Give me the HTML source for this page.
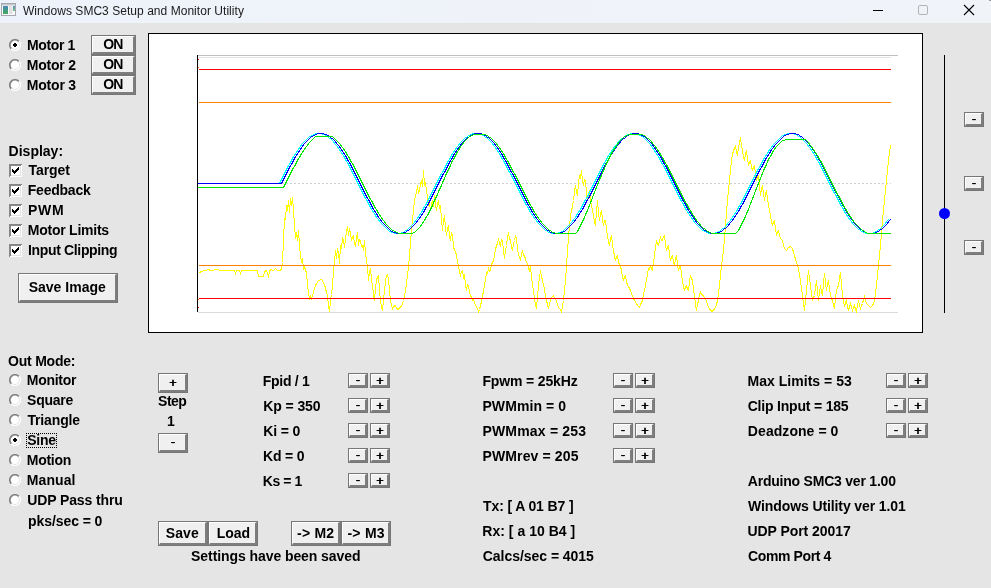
<!DOCTYPE html>
<html>
<head>
<meta charset="utf-8">
<title>Windows SMC3 Setup and Monitor Utility</title>
<style>
html,body{margin:0;padding:0;}
body{will-change:transform;width:991px;height:588px;overflow:hidden;background:#e5e5e5;position:relative;font-family:"Liberation Sans",sans-serif;color:#000;}
#titlebar{position:absolute;left:0;top:0;width:991px;height:23px;background:linear-gradient(90deg,#eef2fa,#f0f3f8);}
#corner{position:absolute;left:989px;top:0;width:2px;height:1px;background:#9a9a9a;}
#title{position:absolute;left:23px;top:0;height:22px;line-height:22px;font-size:12px;color:#1a1a1a;white-space:nowrap;letter-spacing:0.04px;}
.t{position:absolute;font-weight:bold;font-size:14px;line-height:16px;height:16px;white-space:nowrap;}
.btn{position:absolute;box-sizing:border-box;border:1px solid #767676;background:#f0f0f0;}
.btn::before{content:"";position:absolute;left:0;top:0;right:0;bottom:0;border-style:solid;border-width:1px 2px 2px 1px;border-color:#fff #7e7e7e #7e7e7e #fff;}
.sb{position:absolute;box-sizing:border-box;width:20px;height:15px;border:1px solid #767676;background:#f0f0f0;}
.sb::before{content:"";position:absolute;left:0;top:0;right:0;bottom:0;border-style:solid;border-width:1px 2px 2px 1px;border-color:#fff #7e7e7e #7e7e7e #fff;}
.g{position:absolute;font-weight:normal;font-size:12px;line-height:16px;height:16px;white-space:nowrap;text-shadow:1px 0 0 #000;}
.chk{position:absolute;width:13px;height:13px;}
.radio{position:absolute;width:12px;height:12px;}
#plot{position:absolute;left:148px;top:33px;width:775px;height:300px;box-sizing:border-box;border:1px solid #000;background:#fff;}
#focus{position:absolute;left:26px;top:433px;width:31px;height:15px;box-sizing:border-box;border:1px dotted #000;}
</style>
</head>
<body>
<div id="titlebar">
<svg style="position:absolute;left:1px;top:3px" width="16" height="14" viewBox="0 0 16 14"><defs><linearGradient id="ig" x1="0" y1="0" x2="0" y2="1"><stop offset="0" stop-color="#4f86c0"/><stop offset="0.45" stop-color="#3f9a8a"/><stop offset="1" stop-color="#45a860"/></linearGradient><linearGradient id="ih" x1="0" y1="0" x2="0" y2="1"><stop offset="0" stop-color="#5a90c8"/><stop offset="1" stop-color="#7ac080"/></linearGradient></defs><rect x="0.5" y="0.5" width="14" height="12" fill="#fafafa" stroke="#a4a8ae"/><rect x="1" y="1" width="13" height="1.5" fill="#c4c8cc"/><rect x="2" y="3" width="5" height="8" fill="url(#ig)"/><rect x="8" y="3" width="3.5" height="8" fill="#e0e0e0"/><rect x="12" y="3" width="2" height="5" fill="url(#ih)"/></svg>
<div id="title">Windows SMC3 Setup and Monitor Utility</div>
<svg style="position:absolute;left:860px;top:0" width="131" height="23" viewBox="0 0 131 23"><path d="M13 10.5H23" stroke="#000" stroke-width="1" fill="none"/><rect x="58.5" y="5.5" width="9" height="9" rx="1.5" fill="none" stroke="#b4b4b4"/><path d="M104 5L114 15M114 5L104 15" stroke="#000" stroke-width="1.1" fill="none"/></svg>
</div>
<div id="corner"></div>
<div id="plot"></div>

<!--GRAPH-->
<svg id="g" style="position:absolute;left:0;top:0" width="991" height="340" viewBox="0 0 991 340">
<g shape-rendering="crispEdges" fill="none">
<path d="M197 55.5H898" stroke="#c0c0c0"/>
<path d="M198 57.5H891" stroke="#e4e4e4"/>
<path d="M198 312.5H898" stroke="#dcdcdc"/>
<path d="M198 183.5H891" stroke="#cecece" stroke-dasharray="2 2"/>
</g>
<polyline points="199.5,273.5 200.5,271.5 205.5,270.5 208.5,269.5 210.5,270.5 218.5,269.5 219.5,270.5 234.5,270.5 235.5,273.5 236.5,270.5 239.5,270.5 240.5,273.5 241.5,270.5 257.5,270.5 258.5,276.5 263.5,276.5 264.5,271.5 266.5,270.5 267.5,273.5 268.5,276.5 269.5,271.5 270.5,269.5 273.5,270.5 275.5,268.5 277.5,270.5 280.5,270.5 281.5,268.5 282.5,262.5 283.5,240.5 284.5,218.5 285.5,219.5 286.5,205.5 287.5,210.5 288.5,200.5 289.5,212.5 290.5,198.5 291.5,205.5 292.5,197.5 293.5,210.5 294.5,225.5 295.5,238.5 296.5,232.5 297.5,240.5 298.5,230.5 299.5,245.5 300.5,255.5 301.5,262.5 302.5,258.5 303.5,268.5 304.5,266.5 305.5,270.5 306.5,272.5 307.5,285.5 308.5,292.5 309.5,299.5 310.5,296.5 311.5,298.5 312.5,295.5 314.5,288.5 315.5,285.5 318.5,280.5 321.5,279.5 324.5,284.5 326.5,292.5 327.5,295.5 328.5,305.5 329.5,311.5 330.5,300.5 331.5,294.5 332.5,285.5 333.5,270.5 334.5,262.5 335.5,250.5 336.5,258.5 337.5,248.5 338.5,252.5 339.5,263.5 340.5,245.5 341.5,248.5 342.5,237.5 343.5,240.5 344.5,247.5 345.5,238.5 346.5,232.5 347.5,226.5 348.5,235.5 349.5,228.5 350.5,233.5 351.5,240.5 352.5,236.5 353.5,235.5 354.5,243.5 355.5,245.5 356.5,238.5 357.5,232.5 358.5,245.5 359.5,239.5 360.5,240.5 361.5,246.5 362.5,245.5 363.5,250.5 364.5,240.5 365.5,252.5 366.5,260.5 367.5,266.5 368.5,280.5 369.5,272.5 370.5,268.5 371.5,279.5 372.5,285.5 373.5,294.5 374.5,300.5 375.5,288.5 376.5,280.5 377.5,276.5 378.5,275.5 379.5,290.5 380.5,300.5 381.5,306.5 382.5,310.5 383.5,300.5 384.5,290.5 385.5,281.5 386.5,275.5 387.5,274.5 388.5,278.5 389.5,290.5 390.5,300.5 391.5,305.5 392.5,308.5 393.5,306.5 395.5,305.5 396.5,308.5 398.5,309.5 399.5,307.5 401.5,306.5 402.5,303.5 403.5,300.5 404.5,296.5 405.5,290.5 406.5,283.5 407.5,275.5 408.5,266.5 409.5,255.5 410.5,242.5 411.5,230.5 412.5,220.5 413.5,210.5 414.5,200.5 415.5,195.5 416.5,192.5 417.5,185.5 418.5,193.5 419.5,190.5 420.5,183.5 421.5,180.5 422.5,186.5 423.5,170.5 424.5,185.5 425.5,182.5 426.5,190.5 427.5,196.5 428.5,205.5 429.5,202.5 430.5,210.5 431.5,204.5 432.5,200.5 433.5,206.5 434.5,195.5 435.5,204.5 436.5,210.5 437.5,203.5 438.5,200.5 439.5,208.5 440.5,205.5 441.5,219.5 442.5,230.5 443.5,220.5 444.5,215.5 445.5,228.5 446.5,235.5 447.5,228.5 448.5,225.5 449.5,236.5 450.5,240.5 451.5,232.5 452.5,235.5 453.5,246.5 454.5,250.5 455.5,251.5 456.5,255.5 457.5,262.5 458.5,265.5 459.5,272.5 460.5,275.5 461.5,271.5 462.5,270.5 463.5,277.5 464.5,275.5 465.5,284.5 466.5,290.5 467.5,284.5 468.5,285.5 469.5,292.5 470.5,295.5 471.5,297.5 472.5,300.5 473.5,299.5 475.5,305.5 476.5,306.5 478.5,311.5 479.5,309.5 480.5,305.5 481.5,301.5 482.5,295.5 483.5,291.5 484.5,285.5 485.5,279.5 486.5,272.5 487.5,273.5 488.5,268.5 489.5,271.5 490.5,270.5 491.5,264.5 492.5,262.5 493.5,260.5 494.5,255.5 495.5,249.5 496.5,245.5 497.5,243.5 498.5,238.5 499.5,243.5 500.5,245.5 501.5,239.5 502.5,240.5 503.5,250.5 504.5,258.5 505.5,250.5 506.5,245.5 507.5,237.5 508.5,232.5 509.5,238.5 510.5,240.5 511.5,247.5 512.5,250.5 513.5,243.5 514.5,240.5 515.5,236.5 516.5,238.5 517.5,248.5 518.5,255.5 519.5,256.5 520.5,260.5 521.5,254.5 522.5,250.5 523.5,255.5 524.5,255.5 525.5,259.5 526.5,262.5 527.5,263.5 528.5,268.5 529.5,270.5 530.5,266.5 531.5,276.5 532.5,284.5 533.5,290.5 534.5,298.5 535.5,304.5 536.5,308.5 537.5,296.5 538.5,285.5 539.5,277.5 540.5,270.5 541.5,276.5 542.5,280.5 543.5,284.5 545.5,295.5 546.5,300.5 548.5,308.5 549.5,303.5 550.5,300.5 551.5,297.5 553.5,295.5 554.5,298.5 556.5,300.5 557.5,305.5 559.5,308.5 560.5,309.5 561.5,311.5 562.5,306.5 563.5,300.5 564.5,290.5 565.5,280.5 566.5,265.5 567.5,250.5 568.5,237.5 569.5,225.5 570.5,216.5 571.5,210.5 572.5,206.5 573.5,200.5 574.5,191.5 575.5,185.5 576.5,192.5 577.5,195.5 578.5,183.5 579.5,175.5 580.5,178.5 581.5,170.5 582.5,180.5 583.5,185.5 584.5,179.5 585.5,180.5 586.5,192.5 587.5,200.5 588.5,193.5 589.5,190.5 590.5,199.5 591.5,205.5 592.5,209.5 593.5,215.5 594.5,221.5 595.5,225.5 596.5,211.5 597.5,200.5 598.5,212.5 599.5,220.5 600.5,213.5 601.5,210.5 602.5,219.5 603.5,225.5 604.5,220.5 605.5,220.5 606.5,229.5 607.5,235.5 608.5,241.5 609.5,245.5 610.5,238.5 611.5,235.5 612.5,244.5 613.5,250.5 614.5,256.5 615.5,260.5 616.5,256.5 617.5,255.5 618.5,261.5 619.5,265.5 620.5,266.5 621.5,270.5 622.5,276.5 623.5,280.5 624.5,276.5 625.5,275.5 626.5,281.5 627.5,285.5 628.5,286.5 630.5,290.5 631.5,293.5 633.5,298.5 634.5,300.5 636.5,303.5 637.5,305.5 639.5,307.5 640.5,304.5 642.5,300.5 643.5,294.5 645.5,285.5 646.5,279.5 648.5,268.5 649.5,269.5 650.5,265.5 651.5,269.5 652.5,270.5 653.5,262.5 654.5,255.5 655.5,247.5 656.5,240.5 657.5,244.5 658.5,245.5 659.5,240.5 660.5,237.5 661.5,240.5 662.5,240.5 663.5,236.5 664.5,235.5 665.5,244.5 666.5,250.5 667.5,246.5 668.5,245.5 669.5,254.5 670.5,260.5 671.5,256.5 672.5,255.5 673.5,261.5 674.5,265.5 675.5,259.5 676.5,255.5 677.5,264.5 678.5,270.5 679.5,266.5 680.5,265.5 681.5,274.5 682.5,280.5 683.5,286.5 684.5,290.5 685.5,286.5 686.5,285.5 687.5,289.5 688.5,290.5 689.5,281.5 690.5,275.5 691.5,278.5 692.5,280.5 693.5,289.5 694.5,295.5 695.5,304.5 696.5,310.5 697.5,304.5 698.5,300.5 699.5,294.5 700.5,292.5 701.5,294.5 703.5,295.5 704.5,298.5 706.5,300.5 707.5,305.5 709.5,308.5 710.5,310.5 712.5,311.5 713.5,309.5 715.5,308.5 716.5,304.5 717.5,300.5 718.5,293.5 719.5,285.5 720.5,275.5 721.5,265.5 722.5,258.5 723.5,250.5 724.5,238.5 725.5,225.5 726.5,212.5 727.5,200.5 728.5,190.5 729.5,180.5 730.5,170.5 731.5,160.5 732.5,154.5 733.5,150.5 734.5,148.5 735.5,145.5 736.5,151.5 737.5,155.5 738.5,147.5 739.5,142.5 740.5,137.5 741.5,145.5 742.5,150.5 743.5,156.5 744.5,160.5 745.5,154.5 746.5,150.5 747.5,158.5 748.5,165.5 749.5,161.5 750.5,160.5 751.5,166.5 752.5,170.5 753.5,166.5 754.5,165.5 755.5,174.5 756.5,180.5 757.5,176.5 758.5,175.5 759.5,186.5 760.5,195.5 761.5,189.5 762.5,185.5 763.5,193.5 764.5,200.5 765.5,194.5 766.5,190.5 767.5,198.5 768.5,205.5 769.5,210.5 770.5,215.5 771.5,221.5 772.5,225.5 773.5,221.5 774.5,220.5 775.5,228.5 776.5,235.5 777.5,231.5 778.5,230.5 779.5,235.5 780.5,238.5 781.5,239.5 782.5,240.5 783.5,245.5 784.5,248.5 785.5,249.5 786.5,250.5 788.5,247.5 790.5,246.5 792.5,248.5 793.5,252.5 794.5,255.5 795.5,259.5 796.5,262.5 797.5,265.5 798.5,268.5 799.5,274.5 800.5,280.5 801.5,288.5 802.5,295.5 803.5,303.5 804.5,310.5 805.5,299.5 806.5,290.5 807.5,279.5 808.5,270.5 809.5,278.5 810.5,285.5 811.5,293.5 812.5,300.5 813.5,297.5 814.5,295.5 815.5,287.5 816.5,280.5 817.5,291.5 818.5,300.5 819.5,292.5 820.5,285.5 821.5,291.5 822.5,295.5 823.5,283.5 824.5,273.5 825.5,282.5 826.5,290.5 827.5,284.5 828.5,280.5 829.5,288.5 830.5,295.5 831.5,298.5 832.5,300.5 833.5,305.5 834.5,308.5 835.5,298.5 836.5,290.5 837.5,287.5 838.5,285.5 839.5,278.5 840.5,272.5 841.5,284.5 842.5,295.5 843.5,301.5 844.5,306.5 845.5,302.5 846.5,300.5 847.5,306.5 848.5,310.5 849.5,306.5 850.5,303.5 851.5,307.5 852.5,310.5 853.5,307.5 854.5,305.5 855.5,309.5 856.5,311.5 857.5,305.5 858.5,300.5 859.5,305.5 860.5,308.5 861.5,305.5 862.5,303.5 863.5,299.5 864.5,296.5 865.5,300.5 866.5,303.5 868.5,305.5 870.5,307.5 872.5,305.5 873.5,303.5 874.5,300.5 875.5,293.5 876.5,285.5 877.5,275.5 878.5,265.5 879.5,255.5 880.5,245.5 881.5,232.5 882.5,220.5 883.5,210.5 884.5,200.5 885.5,190.5 886.5,180.5 887.5,170.5 888.5,160.5 889.5,152.5 890.5,145.5" fill="none" stroke="#ffff00" stroke-width="1" shape-rendering="crispEdges"/>
<g shape-rendering="crispEdges" fill="none">
<path d="M199 69.5H891M199 298.5H891" stroke="#ff0000" stroke-width="1"/>
<path d="M199 102.5H891M199 265.5H891" stroke="#ff8000" stroke-width="1"/>
</g>
<polyline points="279.5,183.5 280.5,181.5 281.5,179.5 282.5,177.5 283.5,175.5 284.5,173.5 285.5,171.5 286.5,169.5 287.5,167.5 288.5,165.5 289.5,164.5 290.5,162.5 291.5,160.5 292.5,158.5 293.5,156.5 294.5,155.5 295.5,153.5 296.5,152.5 297.5,150.5 298.5,149.5 299.5,147.5 300.5,146.5 301.5,144.5 302.5,143.5 303.5,142.5 304.5,141.5 305.5,140.5 306.5,139.5 307.5,138.5 308.5,137.5 309.5,136.5 310.5,136.5 311.5,135.5 312.5,135.5 313.5,134.5 314.5,134.5 315.5,133.5 316.5,133.5 317.5,133.5 318.5,133.5 319.5,133.5 320.5,133.5 321.5,133.5 322.5,134.5 323.5,134.5 324.5,134.5 325.5,135.5 326.5,135.5 327.5,136.5 328.5,137.5 329.5,138.5 330.5,138.5 331.5,139.5 332.5,140.5 333.5,141.5 334.5,143.5 335.5,144.5 336.5,145.5 337.5,146.5 338.5,148.5 339.5,149.5 340.5,151.5 341.5,152.5 342.5,154.5 343.5,155.5 344.5,157.5 345.5,159.5 346.5,161.5 347.5,162.5 348.5,164.5 349.5,166.5 350.5,168.5 351.5,170.5 352.5,172.5 353.5,174.5 354.5,176.5 355.5,178.5 356.5,180.5 357.5,182.5 358.5,184.5 359.5,186.5 360.5,188.5 361.5,190.5 362.5,192.5 363.5,194.5 364.5,196.5 365.5,198.5 366.5,199.5 367.5,201.5 368.5,203.5 369.5,205.5 370.5,207.5 371.5,209.5 372.5,210.5 373.5,212.5 374.5,213.5 375.5,215.5 376.5,217.5 377.5,218.5 378.5,219.5 379.5,221.5 380.5,222.5 381.5,223.5 382.5,224.5 383.5,225.5 384.5,226.5 385.5,227.5 386.5,228.5 387.5,229.5 388.5,230.5 389.5,231.5 390.5,231.5 391.5,232.5 392.5,232.5 393.5,232.5 394.5,233.5 395.5,233.5 396.5,233.5 397.5,233.5 398.5,233.5 399.5,233.5 400.5,233.5 401.5,232.5 402.5,232.5 403.5,232.5 404.5,231.5 405.5,230.5 406.5,230.5 407.5,229.5 408.5,228.5 409.5,227.5 410.5,226.5 411.5,225.5 412.5,224.5 413.5,223.5 414.5,222.5 415.5,220.5 416.5,219.5 417.5,218.5 418.5,216.5 419.5,215.5 420.5,213.5 421.5,212.5 422.5,210.5 423.5,208.5 424.5,206.5 425.5,205.5 426.5,203.5 427.5,201.5 428.5,199.5 429.5,197.5 430.5,195.5 431.5,193.5 432.5,191.5 433.5,189.5 434.5,187.5 435.5,185.5 436.5,183.5 437.5,181.5 438.5,179.5 439.5,177.5 440.5,175.5 441.5,173.5 442.5,172.5 443.5,170.5 444.5,168.5 445.5,166.5 446.5,164.5 447.5,162.5 448.5,160.5 449.5,159.5 450.5,157.5 451.5,155.5 452.5,153.5 453.5,152.5 454.5,150.5 455.5,149.5 456.5,147.5 457.5,146.5 458.5,145.5 459.5,143.5 460.5,142.5 461.5,141.5 462.5,140.5 463.5,139.5 464.5,138.5 465.5,137.5 466.5,137.5 467.5,136.5 468.5,135.5 469.5,135.5 470.5,134.5 471.5,134.5 472.5,133.5 473.5,133.5 474.5,133.5 475.5,133.5 476.5,133.5 477.5,133.5 478.5,133.5 479.5,133.5 480.5,134.5 481.5,134.5 482.5,135.5 483.5,135.5 484.5,136.5 485.5,137.5 486.5,137.5 487.5,138.5 488.5,139.5 489.5,140.5 490.5,141.5 491.5,142.5 492.5,143.5 493.5,145.5 494.5,146.5 495.5,147.5 496.5,149.5 497.5,150.5 498.5,152.5 499.5,153.5 500.5,155.5 501.5,157.5 502.5,159.5 503.5,160.5 504.5,162.5 505.5,164.5 506.5,166.5 507.5,168.5 508.5,170.5 509.5,172.5 510.5,173.5 511.5,175.5 512.5,177.5 513.5,179.5 514.5,181.5 515.5,183.5 516.5,185.5 517.5,187.5 518.5,189.5 519.5,191.5 520.5,193.5 521.5,195.5 522.5,197.5 523.5,199.5 524.5,201.5 525.5,203.5 526.5,205.5 527.5,206.5 528.5,208.5 529.5,210.5 530.5,212.5 531.5,213.5 532.5,215.5 533.5,216.5 534.5,218.5 535.5,219.5 536.5,220.5 537.5,222.5 538.5,223.5 539.5,224.5 540.5,225.5 541.5,226.5 542.5,227.5 543.5,228.5 544.5,229.5 545.5,230.5 546.5,230.5 547.5,231.5 548.5,232.5 549.5,232.5 550.5,232.5 551.5,233.5 552.5,233.5 553.5,233.5 554.5,233.5 555.5,233.5 556.5,233.5 557.5,233.5 558.5,232.5 559.5,232.5 560.5,232.5 561.5,231.5 562.5,231.5 563.5,230.5 564.5,229.5 565.5,228.5 566.5,227.5 567.5,226.5 568.5,225.5 569.5,224.5 570.5,223.5 571.5,222.5 572.5,221.5 573.5,219.5 574.5,218.5 575.5,217.5 576.5,215.5 577.5,213.5 578.5,212.5 579.5,210.5 580.5,209.5 581.5,207.5 582.5,205.5 583.5,203.5 584.5,201.5 585.5,199.5 586.5,198.5 587.5,196.5 588.5,194.5 589.5,192.5 590.5,190.5 591.5,188.5 592.5,186.5 593.5,184.5 594.5,182.5 595.5,180.5 596.5,178.5 597.5,176.5 598.5,174.5 599.5,172.5 600.5,170.5 601.5,168.5 602.5,166.5 603.5,164.5 604.5,162.5 605.5,161.5 606.5,159.5 607.5,157.5 608.5,155.5 609.5,154.5 610.5,152.5 611.5,151.5 612.5,149.5 613.5,148.5 614.5,146.5 615.5,145.5 616.5,144.5 617.5,143.5 618.5,141.5 619.5,140.5 620.5,139.5 621.5,138.5 622.5,138.5 623.5,137.5 624.5,136.5 625.5,135.5 626.5,135.5 627.5,134.5 628.5,134.5 629.5,134.5 630.5,133.5 631.5,133.5 632.5,133.5 633.5,133.5 634.5,133.5 635.5,133.5 636.5,133.5 637.5,134.5 638.5,134.5 639.5,135.5 640.5,135.5 641.5,136.5 642.5,136.5 643.5,137.5 644.5,138.5 645.5,139.5 646.5,140.5 647.5,141.5 648.5,142.5 649.5,143.5 650.5,144.5 651.5,146.5 652.5,147.5 653.5,149.5 654.5,150.5 655.5,152.5 656.5,153.5 657.5,155.5 658.5,156.5 659.5,158.5 660.5,160.5 661.5,162.5 662.5,164.5 663.5,165.5 664.5,167.5 665.5,169.5 666.5,171.5 667.5,173.5 668.5,175.5 669.5,177.5 670.5,179.5 671.5,181.5 672.5,183.5 673.5,185.5 674.5,187.5 675.5,189.5 676.5,191.5 677.5,193.5 678.5,195.5 679.5,197.5 680.5,199.5 681.5,201.5 682.5,202.5 683.5,204.5 684.5,206.5 685.5,208.5 686.5,210.5 687.5,211.5 688.5,213.5 689.5,214.5 690.5,216.5 691.5,217.5 692.5,219.5 693.5,220.5 694.5,222.5 695.5,223.5 696.5,224.5 697.5,225.5 698.5,226.5 699.5,227.5 700.5,228.5 701.5,229.5 702.5,230.5 703.5,230.5 704.5,231.5 705.5,231.5 706.5,232.5 707.5,232.5 708.5,233.5 709.5,233.5 710.5,233.5 711.5,233.5 712.5,233.5 713.5,233.5 714.5,233.5 715.5,232.5 716.5,232.5 717.5,232.5 718.5,231.5 719.5,231.5 720.5,230.5 721.5,229.5 722.5,228.5 723.5,228.5 724.5,227.5 725.5,226.5 726.5,225.5 727.5,223.5 728.5,222.5 729.5,221.5 730.5,220.5 731.5,218.5 732.5,217.5 733.5,215.5 734.5,214.5 735.5,212.5 736.5,211.5 737.5,209.5 738.5,207.5 739.5,205.5 740.5,204.5 741.5,202.5 742.5,200.5 743.5,198.5 744.5,196.5 745.5,194.5 746.5,192.5 747.5,190.5 748.5,188.5 749.5,186.5 750.5,184.5 751.5,182.5 752.5,180.5 753.5,178.5 754.5,176.5 755.5,174.5 756.5,172.5 757.5,170.5 758.5,168.5 759.5,167.5 760.5,165.5 761.5,163.5 762.5,161.5 763.5,159.5 764.5,157.5 765.5,156.5 766.5,154.5 767.5,153.5 768.5,151.5 769.5,149.5 770.5,148.5 771.5,147.5 772.5,145.5 773.5,144.5 774.5,143.5 775.5,142.5 776.5,141.5 777.5,140.5 778.5,139.5 779.5,138.5 780.5,137.5 781.5,136.5 782.5,135.5 783.5,135.5 784.5,134.5 785.5,134.5 786.5,134.5 787.5,133.5 788.5,133.5 789.5,133.5 790.5,133.5 791.5,133.5 792.5,133.5 793.5,133.5 794.5,134.5 795.5,134.5 796.5,134.5 797.5,135.5 798.5,136.5 799.5,136.5 800.5,137.5 801.5,138.5 802.5,139.5 803.5,140.5 804.5,141.5 805.5,142.5 806.5,143.5 807.5,144.5 808.5,146.5 809.5,147.5 810.5,148.5 811.5,150.5 812.5,151.5 813.5,153.5 814.5,154.5 815.5,156.5 816.5,158.5 817.5,160.5 818.5,161.5 819.5,163.5 820.5,165.5 821.5,167.5 822.5,169.5 823.5,171.5 824.5,173.5 825.5,175.5 826.5,177.5 827.5,179.5 828.5,181.5 829.5,183.5 830.5,185.5 831.5,187.5 832.5,189.5 833.5,191.5 834.5,193.5 835.5,194.5 836.5,196.5 837.5,198.5 838.5,200.5 839.5,202.5 840.5,204.5 841.5,206.5 842.5,207.5 843.5,209.5 844.5,211.5 845.5,213.5 846.5,214.5 847.5,216.5 848.5,217.5 849.5,219.5 850.5,220.5 851.5,221.5 852.5,223.5 853.5,224.5 854.5,225.5 855.5,226.5 856.5,227.5 857.5,228.5 858.5,229.5 859.5,229.5 860.5,230.5 861.5,231.5 862.5,231.5 863.5,232.5 864.5,232.5 865.5,233.5 866.5,233.5 867.5,233.5 868.5,233.5 869.5,233.5 870.5,233.5 871.5,233.5 872.5,233.5 873.5,232.5 874.5,232.5 875.5,231.5 876.5,231.5 877.5,230.5 878.5,229.5 879.5,229.5 880.5,228.5 881.5,227.5 882.5,226.5 883.5,225.5 884.5,224.5 885.5,223.5 886.5,221.5 887.5,220.5 888.5,219.5" fill="none" stroke="#00ffff" stroke-width="1" shape-rendering="crispEdges"/>
<polyline points="197.5,183.5 198.5,183.5 199.5,183.5 200.5,183.5 201.5,183.5 202.5,183.5 203.5,183.5 204.5,183.5 205.5,183.5 206.5,183.5 207.5,183.5 208.5,183.5 209.5,183.5 210.5,183.5 211.5,183.5 212.5,183.5 213.5,183.5 214.5,183.5 215.5,183.5 216.5,183.5 217.5,183.5 218.5,183.5 219.5,183.5 220.5,183.5 221.5,183.5 222.5,183.5 223.5,183.5 224.5,183.5 225.5,183.5 226.5,183.5 227.5,183.5 228.5,183.5 229.5,183.5 230.5,183.5 231.5,183.5 232.5,183.5 233.5,183.5 234.5,183.5 235.5,183.5 236.5,183.5 237.5,183.5 238.5,183.5 239.5,183.5 240.5,183.5 241.5,183.5 242.5,183.5 243.5,183.5 244.5,183.5 245.5,183.5 246.5,183.5 247.5,183.5 248.5,183.5 249.5,183.5 250.5,183.5 251.5,183.5 252.5,183.5 253.5,183.5 254.5,183.5 255.5,183.5 256.5,183.5 257.5,183.5 258.5,183.5 259.5,183.5 260.5,183.5 261.5,183.5 262.5,183.5 263.5,183.5 264.5,183.5 265.5,183.5 266.5,183.5 267.5,183.5 268.5,183.5 269.5,183.5 270.5,183.5 271.5,183.5 272.5,183.5 273.5,183.5 274.5,183.5 275.5,183.5 276.5,183.5 277.5,183.5 278.5,183.5 279.5,183.5 280.5,183.5 281.5,183.5 282.5,181.5 283.5,179.5 284.5,177.5 285.5,175.5 286.5,173.5 287.5,171.5 288.5,169.5 289.5,167.5 290.5,165.5 291.5,164.5 292.5,162.5 293.5,160.5 294.5,158.5 295.5,156.5 296.5,155.5 297.5,153.5 298.5,152.5 299.5,150.5 300.5,149.5 301.5,147.5 302.5,146.5 303.5,144.5 304.5,143.5 305.5,142.5 306.5,141.5 307.5,140.5 308.5,139.5 309.5,138.5 310.5,137.5 311.5,136.5 312.5,136.5 313.5,135.5 314.5,135.5 315.5,134.5 316.5,134.5 317.5,133.5 318.5,133.5 319.5,133.5 320.5,133.5 321.5,133.5 322.5,133.5 323.5,133.5 324.5,134.5 325.5,134.5 326.5,134.5 327.5,135.5 328.5,135.5 329.5,136.5 330.5,137.5 331.5,138.5 332.5,138.5 333.5,139.5 334.5,140.5 335.5,141.5 336.5,143.5 337.5,144.5 338.5,145.5 339.5,146.5 340.5,148.5 341.5,149.5 342.5,151.5 343.5,152.5 344.5,154.5 345.5,155.5 346.5,157.5 347.5,159.5 348.5,161.5 349.5,162.5 350.5,164.5 351.5,166.5 352.5,168.5 353.5,170.5 354.5,172.5 355.5,174.5 356.5,176.5 357.5,178.5 358.5,180.5 359.5,182.5 360.5,184.5 361.5,186.5 362.5,188.5 363.5,190.5 364.5,192.5 365.5,194.5 366.5,196.5 367.5,198.5 368.5,199.5 369.5,201.5 370.5,203.5 371.5,205.5 372.5,207.5 373.5,209.5 374.5,210.5 375.5,212.5 376.5,213.5 377.5,215.5 378.5,217.5 379.5,218.5 380.5,219.5 381.5,221.5 382.5,222.5 383.5,223.5 384.5,224.5 385.5,225.5 386.5,226.5 387.5,227.5 388.5,228.5 389.5,229.5 390.5,230.5 391.5,231.5 392.5,231.5 393.5,232.5 394.5,232.5 395.5,232.5 396.5,233.5 397.5,233.5 398.5,233.5 399.5,233.5 400.5,233.5 401.5,233.5 402.5,233.5 403.5,232.5 404.5,232.5 405.5,232.5 406.5,231.5 407.5,230.5 408.5,230.5 409.5,229.5 410.5,228.5 411.5,227.5 412.5,226.5 413.5,225.5 414.5,224.5 415.5,223.5 416.5,222.5 417.5,220.5 418.5,219.5 419.5,218.5 420.5,216.5 421.5,215.5 422.5,213.5 423.5,212.5 424.5,210.5 425.5,208.5 426.5,206.5 427.5,205.5 428.5,203.5 429.5,201.5 430.5,199.5 431.5,197.5 432.5,195.5 433.5,193.5 434.5,191.5 435.5,189.5 436.5,187.5 437.5,185.5 438.5,183.5 439.5,181.5 440.5,179.5 441.5,177.5 442.5,175.5 443.5,173.5 444.5,172.5 445.5,170.5 446.5,168.5 447.5,166.5 448.5,164.5 449.5,162.5 450.5,160.5 451.5,159.5 452.5,157.5 453.5,155.5 454.5,153.5 455.5,152.5 456.5,150.5 457.5,149.5 458.5,147.5 459.5,146.5 460.5,145.5 461.5,143.5 462.5,142.5 463.5,141.5 464.5,140.5 465.5,139.5 466.5,138.5 467.5,137.5 468.5,137.5 469.5,136.5 470.5,135.5 471.5,135.5 472.5,134.5 473.5,134.5 474.5,133.5 475.5,133.5 476.5,133.5 477.5,133.5 478.5,133.5 479.5,133.5 480.5,133.5 481.5,133.5 482.5,134.5 483.5,134.5 484.5,135.5 485.5,135.5 486.5,136.5 487.5,137.5 488.5,137.5 489.5,138.5 490.5,139.5 491.5,140.5 492.5,141.5 493.5,142.5 494.5,143.5 495.5,145.5 496.5,146.5 497.5,147.5 498.5,149.5 499.5,150.5 500.5,152.5 501.5,153.5 502.5,155.5 503.5,157.5 504.5,159.5 505.5,160.5 506.5,162.5 507.5,164.5 508.5,166.5 509.5,168.5 510.5,170.5 511.5,172.5 512.5,173.5 513.5,175.5 514.5,177.5 515.5,179.5 516.5,181.5 517.5,183.5 518.5,185.5 519.5,187.5 520.5,189.5 521.5,191.5 522.5,193.5 523.5,195.5 524.5,197.5 525.5,199.5 526.5,201.5 527.5,203.5 528.5,205.5 529.5,206.5 530.5,208.5 531.5,210.5 532.5,212.5 533.5,213.5 534.5,215.5 535.5,216.5 536.5,218.5 537.5,219.5 538.5,220.5 539.5,222.5 540.5,223.5 541.5,224.5 542.5,225.5 543.5,226.5 544.5,227.5 545.5,228.5 546.5,229.5 547.5,230.5 548.5,230.5 549.5,231.5 550.5,232.5 551.5,232.5 552.5,232.5 553.5,233.5 554.5,233.5 555.5,233.5 556.5,233.5 557.5,233.5 558.5,233.5 559.5,233.5 560.5,232.5 561.5,232.5 562.5,232.5 563.5,231.5 564.5,231.5 565.5,230.5 566.5,229.5 567.5,228.5 568.5,227.5 569.5,226.5 570.5,225.5 571.5,224.5 572.5,223.5 573.5,222.5 574.5,221.5 575.5,219.5 576.5,218.5 577.5,217.5 578.5,215.5 579.5,213.5 580.5,212.5 581.5,210.5 582.5,209.5 583.5,207.5 584.5,205.5 585.5,203.5 586.5,201.5 587.5,199.5 588.5,198.5 589.5,196.5 590.5,194.5 591.5,192.5 592.5,190.5 593.5,188.5 594.5,186.5 595.5,184.5 596.5,182.5 597.5,180.5 598.5,178.5 599.5,176.5 600.5,174.5 601.5,172.5 602.5,170.5 603.5,168.5 604.5,166.5 605.5,164.5 606.5,162.5 607.5,161.5 608.5,159.5 609.5,157.5 610.5,155.5 611.5,154.5 612.5,152.5 613.5,151.5 614.5,149.5 615.5,148.5 616.5,146.5 617.5,145.5 618.5,144.5 619.5,143.5 620.5,141.5 621.5,140.5 622.5,139.5 623.5,138.5 624.5,138.5 625.5,137.5 626.5,136.5 627.5,135.5 628.5,135.5 629.5,134.5 630.5,134.5 631.5,134.5 632.5,133.5 633.5,133.5 634.5,133.5 635.5,133.5 636.5,133.5 637.5,133.5 638.5,133.5 639.5,134.5 640.5,134.5 641.5,135.5 642.5,135.5 643.5,136.5 644.5,136.5 645.5,137.5 646.5,138.5 647.5,139.5 648.5,140.5 649.5,141.5 650.5,142.5 651.5,143.5 652.5,144.5 653.5,146.5 654.5,147.5 655.5,149.5 656.5,150.5 657.5,152.5 658.5,153.5 659.5,155.5 660.5,156.5 661.5,158.5 662.5,160.5 663.5,162.5 664.5,164.5 665.5,165.5 666.5,167.5 667.5,169.5 668.5,171.5 669.5,173.5 670.5,175.5 671.5,177.5 672.5,179.5 673.5,181.5 674.5,183.5 675.5,185.5 676.5,187.5 677.5,189.5 678.5,191.5 679.5,193.5 680.5,195.5 681.5,197.5 682.5,199.5 683.5,201.5 684.5,202.5 685.5,204.5 686.5,206.5 687.5,208.5 688.5,210.5 689.5,211.5 690.5,213.5 691.5,214.5 692.5,216.5 693.5,217.5 694.5,219.5 695.5,220.5 696.5,222.5 697.5,223.5 698.5,224.5 699.5,225.5 700.5,226.5 701.5,227.5 702.5,228.5 703.5,229.5 704.5,230.5 705.5,230.5 706.5,231.5 707.5,231.5 708.5,232.5 709.5,232.5 710.5,233.5 711.5,233.5 712.5,233.5 713.5,233.5 714.5,233.5 715.5,233.5 716.5,233.5 717.5,232.5 718.5,232.5 719.5,232.5 720.5,231.5 721.5,231.5 722.5,230.5 723.5,229.5 724.5,228.5 725.5,228.5 726.5,227.5 727.5,226.5 728.5,225.5 729.5,223.5 730.5,222.5 731.5,221.5 732.5,220.5 733.5,218.5 734.5,217.5 735.5,215.5 736.5,214.5 737.5,212.5 738.5,211.5 739.5,209.5 740.5,207.5 741.5,205.5 742.5,204.5 743.5,202.5 744.5,200.5 745.5,198.5 746.5,196.5 747.5,194.5 748.5,192.5 749.5,190.5 750.5,188.5 751.5,186.5 752.5,184.5 753.5,182.5 754.5,180.5 755.5,178.5 756.5,176.5 757.5,174.5 758.5,172.5 759.5,170.5 760.5,168.5 761.5,167.5 762.5,165.5 763.5,163.5 764.5,161.5 765.5,159.5 766.5,157.5 767.5,156.5 768.5,154.5 769.5,153.5 770.5,151.5 771.5,149.5 772.5,148.5 773.5,147.5 774.5,145.5 775.5,144.5 776.5,143.5 777.5,142.5 778.5,141.5 779.5,140.5 780.5,139.5 781.5,138.5 782.5,137.5 783.5,136.5 784.5,135.5 785.5,135.5 786.5,134.5 787.5,134.5 788.5,134.5 789.5,133.5 790.5,133.5 791.5,133.5 792.5,133.5 793.5,133.5 794.5,133.5 795.5,133.5 796.5,134.5 797.5,134.5 798.5,134.5 799.5,135.5 800.5,136.5 801.5,136.5 802.5,137.5 803.5,138.5 804.5,139.5 805.5,140.5 806.5,141.5 807.5,142.5 808.5,143.5 809.5,144.5 810.5,146.5 811.5,147.5 812.5,148.5 813.5,150.5 814.5,151.5 815.5,153.5 816.5,154.5 817.5,156.5 818.5,158.5 819.5,160.5 820.5,161.5 821.5,163.5 822.5,165.5 823.5,167.5 824.5,169.5 825.5,171.5 826.5,173.5 827.5,175.5 828.5,177.5 829.5,179.5 830.5,181.5 831.5,183.5 832.5,185.5 833.5,187.5 834.5,189.5 835.5,191.5 836.5,193.5 837.5,194.5 838.5,196.5 839.5,198.5 840.5,200.5 841.5,202.5 842.5,204.5 843.5,206.5 844.5,207.5 845.5,209.5 846.5,211.5 847.5,213.5 848.5,214.5 849.5,216.5 850.5,217.5 851.5,219.5 852.5,220.5 853.5,221.5 854.5,223.5 855.5,224.5 856.5,225.5 857.5,226.5 858.5,227.5 859.5,228.5 860.5,229.5 861.5,229.5 862.5,230.5 863.5,231.5 864.5,231.5 865.5,232.5 866.5,232.5 867.5,233.5 868.5,233.5 869.5,233.5 870.5,233.5 871.5,233.5 872.5,233.5 873.5,233.5 874.5,233.5 875.5,232.5 876.5,232.5 877.5,231.5 878.5,231.5 879.5,230.5 880.5,229.5 881.5,229.5 882.5,228.5 883.5,227.5 884.5,226.5 885.5,225.5 886.5,224.5 887.5,223.5 888.5,221.5 889.5,220.5 890.5,219.5" fill="none" stroke="#0000ff" stroke-width="1" shape-rendering="crispEdges"/>
<polyline points="197.5,187.5 198.5,187.5 199.5,187.5 200.5,187.5 201.5,187.5 202.5,187.5 203.5,187.5 204.5,187.5 205.5,187.5 206.5,187.5 207.5,187.5 208.5,187.5 209.5,187.5 210.5,187.5 211.5,187.5 212.5,187.5 213.5,187.5 214.5,187.5 215.5,187.5 216.5,187.5 217.5,187.5 218.5,187.5 219.5,187.5 220.5,187.5 221.5,187.5 222.5,187.5 223.5,187.5 224.5,187.5 225.5,187.5 226.5,187.5 227.5,187.5 228.5,187.5 229.5,187.5 230.5,187.5 231.5,187.5 232.5,187.5 233.5,187.5 234.5,187.5 235.5,187.5 236.5,187.5 237.5,187.5 238.5,187.5 239.5,187.5 240.5,187.5 241.5,187.5 242.5,187.5 243.5,187.5 244.5,187.5 245.5,187.5 246.5,187.5 247.5,187.5 248.5,187.5 249.5,187.5 250.5,187.5 251.5,187.5 252.5,187.5 253.5,187.5 254.5,187.5 255.5,187.5 256.5,187.5 257.5,187.5 258.5,187.5 259.5,187.5 260.5,187.5 261.5,187.5 262.5,187.5 263.5,187.5 264.5,187.5 265.5,187.5 266.5,187.5 267.5,187.5 268.5,187.5 269.5,187.5 270.5,187.5 271.5,187.5 272.5,187.5 273.5,187.5 274.5,187.5 275.5,187.5 276.5,187.5 277.5,187.5 278.5,187.5 279.5,187.5 280.5,187.5 281.5,187.5 282.5,187.5 283.5,187.5 284.5,185.5 285.5,183.5 286.5,181.5 287.5,179.5 288.5,177.5 289.5,175.5 290.5,173.5 291.5,171.5 292.5,169.5 293.5,167.5 294.5,166.5 295.5,164.5 296.5,162.5 297.5,160.5 298.5,158.5 299.5,157.5 300.5,155.5 301.5,153.5 302.5,152.5 303.5,150.5 304.5,149.5 305.5,147.5 306.5,146.5 307.5,145.5 308.5,143.5 309.5,142.5 310.5,141.5 311.5,140.5 312.5,139.5 313.5,138.5 314.5,137.5 315.5,136.5 316.5,136.5 317.5,136.5 318.5,136.5 319.5,136.5 320.5,136.5 321.5,136.5 322.5,136.5 323.5,136.5 324.5,136.5 325.5,136.5 326.5,136.5 327.5,136.5 328.5,136.5 329.5,136.5 330.5,136.5 331.5,136.5 332.5,136.5 333.5,137.5 334.5,138.5 335.5,139.5 336.5,140.5 337.5,141.5 338.5,142.5 339.5,143.5 340.5,144.5 341.5,146.5 342.5,147.5 343.5,148.5 344.5,150.5 345.5,151.5 346.5,153.5 347.5,155.5 348.5,156.5 349.5,158.5 350.5,160.5 351.5,162.5 352.5,163.5 353.5,165.5 354.5,167.5 355.5,169.5 356.5,171.5 357.5,173.5 358.5,175.5 359.5,177.5 360.5,179.5 361.5,181.5 362.5,183.5 363.5,185.5 364.5,187.5 365.5,189.5 366.5,191.5 367.5,193.5 368.5,195.5 369.5,197.5 370.5,199.5 371.5,200.5 372.5,202.5 373.5,204.5 374.5,206.5 375.5,208.5 376.5,209.5 377.5,211.5 378.5,213.5 379.5,214.5 380.5,216.5 381.5,217.5 382.5,219.5 383.5,220.5 384.5,221.5 385.5,223.5 386.5,224.5 387.5,225.5 388.5,226.5 389.5,227.5 390.5,228.5 391.5,229.5 392.5,230.5 393.5,230.5 394.5,231.5 395.5,231.5 396.5,232.5 397.5,232.5 398.5,233.5 399.5,233.5 400.5,233.5 401.5,233.5 402.5,233.5 403.5,233.5 404.5,233.5 405.5,233.5 406.5,233.5 407.5,233.5 408.5,233.5 409.5,233.5 410.5,233.5 411.5,233.5 412.5,233.5 413.5,232.5 414.5,232.5 415.5,231.5 416.5,230.5 417.5,229.5 418.5,228.5 419.5,227.5 420.5,226.5 421.5,224.5 422.5,223.5 423.5,221.5 424.5,220.5 425.5,218.5 426.5,216.5 427.5,215.5 428.5,213.5 429.5,211.5 430.5,209.5 431.5,207.5 432.5,205.5 433.5,202.5 434.5,200.5 435.5,198.5 436.5,196.5 437.5,194.5 438.5,191.5 439.5,189.5 440.5,187.5 441.5,185.5 442.5,182.5 443.5,180.5 444.5,178.5 445.5,175.5 446.5,173.5 447.5,171.5 448.5,169.5 449.5,167.5 450.5,165.5 451.5,162.5 452.5,160.5 453.5,159.5 454.5,157.5 455.5,155.5 456.5,153.5 457.5,151.5 458.5,150.5 459.5,148.5 460.5,146.5 461.5,145.5 462.5,144.5 463.5,142.5 464.5,141.5 465.5,140.5 466.5,139.5 467.5,138.5 468.5,137.5 469.5,136.5 470.5,136.5 471.5,135.5 472.5,135.5 473.5,134.5 474.5,134.5 475.5,134.5 476.5,134.5 477.5,134.5 478.5,134.5 479.5,134.5 480.5,134.5 481.5,134.5 482.5,134.5 483.5,134.5 484.5,134.5 485.5,134.5 486.5,135.5 487.5,135.5 488.5,136.5 489.5,137.5 490.5,137.5 491.5,138.5 492.5,139.5 493.5,140.5 494.5,141.5 495.5,142.5 496.5,143.5 497.5,145.5 498.5,146.5 499.5,147.5 500.5,149.5 501.5,150.5 502.5,152.5 503.5,153.5 504.5,155.5 505.5,157.5 506.5,159.5 507.5,160.5 508.5,162.5 509.5,164.5 510.5,166.5 511.5,168.5 512.5,170.5 513.5,172.5 514.5,173.5 515.5,175.5 516.5,177.5 517.5,179.5 518.5,181.5 519.5,183.5 520.5,185.5 521.5,187.5 522.5,189.5 523.5,191.5 524.5,193.5 525.5,195.5 526.5,197.5 527.5,199.5 528.5,201.5 529.5,203.5 530.5,205.5 531.5,206.5 532.5,208.5 533.5,210.5 534.5,212.5 535.5,213.5 536.5,215.5 537.5,216.5 538.5,218.5 539.5,219.5 540.5,220.5 541.5,222.5 542.5,223.5 543.5,224.5 544.5,225.5 545.5,226.5 546.5,227.5 547.5,228.5 548.5,229.5 549.5,230.5 550.5,230.5 551.5,231.5 552.5,232.5 553.5,232.5 554.5,232.5 555.5,233.5 556.5,233.5 557.5,233.5 558.5,233.5 559.5,233.5 560.5,233.5 561.5,233.5 562.5,233.5 563.5,233.5 564.5,233.5 565.5,233.5 566.5,233.5 567.5,233.5 568.5,233.5 569.5,233.5 570.5,233.5 571.5,233.5 572.5,233.5 573.5,233.5 574.5,233.5 575.5,233.5 576.5,232.5 577.5,231.5 578.5,229.5 579.5,227.5 580.5,225.5 581.5,223.5 582.5,221.5 583.5,219.5 584.5,217.5 585.5,214.5 586.5,212.5 587.5,210.5 588.5,207.5 589.5,205.5 590.5,202.5 591.5,200.5 592.5,197.5 593.5,194.5 594.5,192.5 595.5,189.5 596.5,187.5 597.5,184.5 598.5,182.5 599.5,179.5 600.5,177.5 601.5,175.5 602.5,172.5 603.5,170.5 604.5,168.5 605.5,165.5 606.5,163.5 607.5,161.5 608.5,159.5 609.5,157.5 610.5,155.5 611.5,153.5 612.5,151.5 613.5,150.5 614.5,148.5 615.5,147.5 616.5,145.5 617.5,144.5 618.5,142.5 619.5,141.5 620.5,140.5 621.5,139.5 622.5,138.5 623.5,137.5 624.5,136.5 625.5,136.5 626.5,135.5 627.5,135.5 628.5,134.5 629.5,134.5 630.5,134.5 631.5,134.5 632.5,134.5 633.5,134.5 634.5,134.5 635.5,134.5 636.5,134.5 637.5,134.5 638.5,134.5 639.5,134.5 640.5,134.5 641.5,134.5 642.5,134.5 643.5,135.5 644.5,135.5 645.5,136.5 646.5,137.5 647.5,138.5 648.5,138.5 649.5,139.5 650.5,140.5 651.5,141.5 652.5,143.5 653.5,144.5 654.5,145.5 655.5,146.5 656.5,148.5 657.5,149.5 658.5,151.5 659.5,152.5 660.5,154.5 661.5,156.5 662.5,157.5 663.5,159.5 664.5,161.5 665.5,163.5 666.5,164.5 667.5,166.5 668.5,168.5 669.5,170.5 670.5,172.5 671.5,174.5 672.5,176.5 673.5,178.5 674.5,180.5 675.5,182.5 676.5,184.5 677.5,186.5 678.5,188.5 679.5,190.5 680.5,192.5 681.5,194.5 682.5,196.5 683.5,198.5 684.5,200.5 685.5,202.5 686.5,203.5 687.5,205.5 688.5,207.5 689.5,209.5 690.5,210.5 691.5,212.5 692.5,214.5 693.5,215.5 694.5,217.5 695.5,218.5 696.5,220.5 697.5,221.5 698.5,222.5 699.5,223.5 700.5,225.5 701.5,226.5 702.5,227.5 703.5,228.5 704.5,228.5 705.5,229.5 706.5,230.5 707.5,231.5 708.5,231.5 709.5,232.5 710.5,232.5 711.5,233.5 712.5,233.5 713.5,233.5 714.5,233.5 715.5,233.5 716.5,233.5 717.5,233.5 718.5,233.5 719.5,233.5 720.5,233.5 721.5,233.5 722.5,233.5 723.5,233.5 724.5,233.5 725.5,233.5 726.5,233.5 727.5,233.5 728.5,233.5 729.5,233.5 730.5,233.5 731.5,233.5 732.5,233.5 733.5,233.5 734.5,233.5 735.5,233.5 736.5,232.5 737.5,231.5 738.5,230.5 739.5,228.5 740.5,226.5 741.5,224.5 742.5,222.5 743.5,220.5 744.5,218.5 745.5,216.5 746.5,213.5 747.5,211.5 748.5,209.5 749.5,206.5 750.5,203.5 751.5,201.5 752.5,198.5 753.5,196.5 754.5,193.5 755.5,190.5 756.5,188.5 757.5,185.5 758.5,183.5 759.5,180.5 760.5,178.5 761.5,175.5 762.5,173.5 763.5,170.5 764.5,168.5 765.5,166.5 766.5,164.5 767.5,161.5 768.5,159.5 769.5,157.5 770.5,156.5 771.5,154.5 772.5,152.5 773.5,150.5 774.5,149.5 775.5,147.5 776.5,146.5 777.5,145.5 778.5,144.5 779.5,143.5 780.5,142.5 781.5,141.5 782.5,140.5 783.5,140.5 784.5,140.5 785.5,139.5 786.5,139.5 787.5,139.5 788.5,139.5 789.5,139.5 790.5,139.5 791.5,139.5 792.5,139.5 793.5,139.5 794.5,139.5 795.5,139.5 796.5,139.5 797.5,139.5 798.5,139.5 799.5,139.5 800.5,139.5 801.5,139.5 802.5,139.5 803.5,139.5 804.5,139.5 805.5,139.5 806.5,140.5 807.5,141.5 808.5,142.5 809.5,144.5 810.5,145.5 811.5,146.5 812.5,148.5 813.5,149.5 814.5,151.5 815.5,152.5 816.5,154.5 817.5,155.5 818.5,157.5 819.5,159.5 820.5,160.5 821.5,162.5 822.5,164.5 823.5,166.5 824.5,168.5 825.5,170.5 826.5,172.5 827.5,174.5 828.5,176.5 829.5,178.5 830.5,180.5 831.5,182.5 832.5,184.5 833.5,186.5 834.5,188.5 835.5,190.5 836.5,192.5 837.5,194.5 838.5,195.5 839.5,197.5 840.5,199.5 841.5,201.5 842.5,203.5 843.5,205.5 844.5,207.5 845.5,208.5 846.5,210.5 847.5,212.5 848.5,213.5 849.5,215.5 850.5,216.5 851.5,218.5 852.5,219.5 853.5,221.5 854.5,222.5 855.5,223.5 856.5,224.5 857.5,225.5 858.5,226.5 859.5,227.5 860.5,228.5 861.5,229.5 862.5,230.5 863.5,230.5 864.5,231.5 865.5,232.5 866.5,232.5 867.5,233.5 868.5,233.5 869.5,233.5 870.5,233.5 871.5,233.5 872.5,233.5 873.5,233.5 874.5,233.5 875.5,233.5 876.5,233.5 877.5,233.5 878.5,233.5 879.5,233.5 880.5,233.5 881.5,233.5 882.5,233.5 883.5,233.5 884.5,233.5 885.5,233.5 886.5,233.5 887.5,233.5 888.5,233.5 889.5,233.5 890.5,233.5" fill="none" stroke="#00e600" stroke-width="1" shape-rendering="crispEdges"/>
<g shape-rendering="crispEdges" fill="none">
<path d="M197.5 55V312" stroke="#000"/>
<path d="M198 59.5H199M198 307.5H199" stroke="#ff0000"/>
<path d="M198 67.5H199M198 299.5H199" stroke="#ff8000"/>
<path d="M944.5 55V313" stroke="#000"/>
</g>
<circle cx="944.5" cy="213.5" r="5.5" fill="#0000ff"/>
</svg>
<!--/GRAPH-->
<svg class="radio" style="left:9px;top:39px" width="12" height="12" viewBox="0 0 12 12"><circle cx="6" cy="6" r="6" fill="#fff"/><path d="M2.1 9.9A5.5 5.5 0 0 0 9.9 9.9A5.5 5.5 0 0 0 9.9 2.1" fill="none" stroke="#fff" stroke-width="1"/><path d="M2.8 9.2A4.5 4.5 0 0 0 9.2 9.2A4.5 4.5 0 0 0 9.2 2.8" fill="none" stroke="#e3e3e3" stroke-width="1"/><path d="M2.3 9.7A5.2 5.2 0 0 1 9.7 2.3" fill="none" stroke="#808080" stroke-width="1.7"/><rect x="4" y="5" width="4" height="2" fill="#000"/><rect x="5" y="4" width="2" height="4" fill="#000"/></svg>
<svg class="radio" style="left:9px;top:59px" width="12" height="12" viewBox="0 0 12 12"><circle cx="6" cy="6" r="6" fill="#fff"/><path d="M2.1 9.9A5.5 5.5 0 0 0 9.9 9.9A5.5 5.5 0 0 0 9.9 2.1" fill="none" stroke="#fff" stroke-width="1"/><path d="M2.8 9.2A4.5 4.5 0 0 0 9.2 9.2A4.5 4.5 0 0 0 9.2 2.8" fill="none" stroke="#e3e3e3" stroke-width="1"/><path d="M2.3 9.7A5.2 5.2 0 0 1 9.7 2.3" fill="none" stroke="#808080" stroke-width="1.7"/></svg>
<svg class="radio" style="left:9px;top:79px" width="12" height="12" viewBox="0 0 12 12"><circle cx="6" cy="6" r="6" fill="#fff"/><path d="M2.1 9.9A5.5 5.5 0 0 0 9.9 9.9A5.5 5.5 0 0 0 9.9 2.1" fill="none" stroke="#fff" stroke-width="1"/><path d="M2.8 9.2A4.5 4.5 0 0 0 9.2 9.2A4.5 4.5 0 0 0 9.2 2.8" fill="none" stroke="#e3e3e3" stroke-width="1"/><path d="M2.3 9.7A5.2 5.2 0 0 1 9.7 2.3" fill="none" stroke="#808080" stroke-width="1.7"/></svg>
<svg class="radio" style="left:9px;top:374px" width="12" height="12" viewBox="0 0 12 12"><circle cx="6" cy="6" r="6" fill="#fff"/><path d="M2.1 9.9A5.5 5.5 0 0 0 9.9 9.9A5.5 5.5 0 0 0 9.9 2.1" fill="none" stroke="#fff" stroke-width="1"/><path d="M2.8 9.2A4.5 4.5 0 0 0 9.2 9.2A4.5 4.5 0 0 0 9.2 2.8" fill="none" stroke="#e3e3e3" stroke-width="1"/><path d="M2.3 9.7A5.2 5.2 0 0 1 9.7 2.3" fill="none" stroke="#808080" stroke-width="1.7"/></svg>
<svg class="radio" style="left:9px;top:394px" width="12" height="12" viewBox="0 0 12 12"><circle cx="6" cy="6" r="6" fill="#fff"/><path d="M2.1 9.9A5.5 5.5 0 0 0 9.9 9.9A5.5 5.5 0 0 0 9.9 2.1" fill="none" stroke="#fff" stroke-width="1"/><path d="M2.8 9.2A4.5 4.5 0 0 0 9.2 9.2A4.5 4.5 0 0 0 9.2 2.8" fill="none" stroke="#e3e3e3" stroke-width="1"/><path d="M2.3 9.7A5.2 5.2 0 0 1 9.7 2.3" fill="none" stroke="#808080" stroke-width="1.7"/></svg>
<svg class="radio" style="left:9px;top:414px" width="12" height="12" viewBox="0 0 12 12"><circle cx="6" cy="6" r="6" fill="#fff"/><path d="M2.1 9.9A5.5 5.5 0 0 0 9.9 9.9A5.5 5.5 0 0 0 9.9 2.1" fill="none" stroke="#fff" stroke-width="1"/><path d="M2.8 9.2A4.5 4.5 0 0 0 9.2 9.2A4.5 4.5 0 0 0 9.2 2.8" fill="none" stroke="#e3e3e3" stroke-width="1"/><path d="M2.3 9.7A5.2 5.2 0 0 1 9.7 2.3" fill="none" stroke="#808080" stroke-width="1.7"/></svg>
<svg class="radio" style="left:9px;top:434px" width="12" height="12" viewBox="0 0 12 12"><circle cx="6" cy="6" r="6" fill="#fff"/><path d="M2.1 9.9A5.5 5.5 0 0 0 9.9 9.9A5.5 5.5 0 0 0 9.9 2.1" fill="none" stroke="#fff" stroke-width="1"/><path d="M2.8 9.2A4.5 4.5 0 0 0 9.2 9.2A4.5 4.5 0 0 0 9.2 2.8" fill="none" stroke="#e3e3e3" stroke-width="1"/><path d="M2.3 9.7A5.2 5.2 0 0 1 9.7 2.3" fill="none" stroke="#808080" stroke-width="1.7"/><rect x="4" y="5" width="4" height="2" fill="#000"/><rect x="5" y="4" width="2" height="4" fill="#000"/></svg>
<svg class="radio" style="left:9px;top:454px" width="12" height="12" viewBox="0 0 12 12"><circle cx="6" cy="6" r="6" fill="#fff"/><path d="M2.1 9.9A5.5 5.5 0 0 0 9.9 9.9A5.5 5.5 0 0 0 9.9 2.1" fill="none" stroke="#fff" stroke-width="1"/><path d="M2.8 9.2A4.5 4.5 0 0 0 9.2 9.2A4.5 4.5 0 0 0 9.2 2.8" fill="none" stroke="#e3e3e3" stroke-width="1"/><path d="M2.3 9.7A5.2 5.2 0 0 1 9.7 2.3" fill="none" stroke="#808080" stroke-width="1.7"/></svg>
<svg class="radio" style="left:9px;top:474px" width="12" height="12" viewBox="0 0 12 12"><circle cx="6" cy="6" r="6" fill="#fff"/><path d="M2.1 9.9A5.5 5.5 0 0 0 9.9 9.9A5.5 5.5 0 0 0 9.9 2.1" fill="none" stroke="#fff" stroke-width="1"/><path d="M2.8 9.2A4.5 4.5 0 0 0 9.2 9.2A4.5 4.5 0 0 0 9.2 2.8" fill="none" stroke="#e3e3e3" stroke-width="1"/><path d="M2.3 9.7A5.2 5.2 0 0 1 9.7 2.3" fill="none" stroke="#808080" stroke-width="1.7"/></svg>
<svg class="radio" style="left:9px;top:494px" width="12" height="12" viewBox="0 0 12 12"><circle cx="6" cy="6" r="6" fill="#fff"/><path d="M2.1 9.9A5.5 5.5 0 0 0 9.9 9.9A5.5 5.5 0 0 0 9.9 2.1" fill="none" stroke="#fff" stroke-width="1"/><path d="M2.8 9.2A4.5 4.5 0 0 0 9.2 9.2A4.5 4.5 0 0 0 9.2 2.8" fill="none" stroke="#e3e3e3" stroke-width="1"/><path d="M2.3 9.7A5.2 5.2 0 0 1 9.7 2.3" fill="none" stroke="#808080" stroke-width="1.7"/></svg>
<svg class="chk" style="left:9px;top:164px" width="13" height="13" viewBox="0 0 13 13" shape-rendering="crispEdges"><rect x="0" y="0" width="13" height="13" fill="#fff"/><rect x="1" y="1" width="11" height="11" fill="#e3e3e3"/><path d="M0 0H13L11 2H2V11L0 13Z" fill="#868686"/><rect x="2" y="2" width="9" height="9" fill="#fff"/><g fill="#000"><rect x="3" y="5" width="1" height="3"/><rect x="4" y="6" width="1" height="3"/><rect x="5" y="7" width="1" height="3"/><rect x="6" y="6" width="1" height="3"/><rect x="7" y="5" width="1" height="3"/><rect x="8" y="4" width="1" height="3"/><rect x="9" y="3" width="1" height="3"/></g></svg>
<svg class="chk" style="left:9px;top:184px" width="13" height="13" viewBox="0 0 13 13" shape-rendering="crispEdges"><rect x="0" y="0" width="13" height="13" fill="#fff"/><rect x="1" y="1" width="11" height="11" fill="#e3e3e3"/><path d="M0 0H13L11 2H2V11L0 13Z" fill="#868686"/><rect x="2" y="2" width="9" height="9" fill="#fff"/><g fill="#000"><rect x="3" y="5" width="1" height="3"/><rect x="4" y="6" width="1" height="3"/><rect x="5" y="7" width="1" height="3"/><rect x="6" y="6" width="1" height="3"/><rect x="7" y="5" width="1" height="3"/><rect x="8" y="4" width="1" height="3"/><rect x="9" y="3" width="1" height="3"/></g></svg>
<svg class="chk" style="left:9px;top:204px" width="13" height="13" viewBox="0 0 13 13" shape-rendering="crispEdges"><rect x="0" y="0" width="13" height="13" fill="#fff"/><rect x="1" y="1" width="11" height="11" fill="#e3e3e3"/><path d="M0 0H13L11 2H2V11L0 13Z" fill="#868686"/><rect x="2" y="2" width="9" height="9" fill="#fff"/><g fill="#000"><rect x="3" y="5" width="1" height="3"/><rect x="4" y="6" width="1" height="3"/><rect x="5" y="7" width="1" height="3"/><rect x="6" y="6" width="1" height="3"/><rect x="7" y="5" width="1" height="3"/><rect x="8" y="4" width="1" height="3"/><rect x="9" y="3" width="1" height="3"/></g></svg>
<svg class="chk" style="left:9px;top:224px" width="13" height="13" viewBox="0 0 13 13" shape-rendering="crispEdges"><rect x="0" y="0" width="13" height="13" fill="#fff"/><rect x="1" y="1" width="11" height="11" fill="#e3e3e3"/><path d="M0 0H13L11 2H2V11L0 13Z" fill="#868686"/><rect x="2" y="2" width="9" height="9" fill="#fff"/><g fill="#000"><rect x="3" y="5" width="1" height="3"/><rect x="4" y="6" width="1" height="3"/><rect x="5" y="7" width="1" height="3"/><rect x="6" y="6" width="1" height="3"/><rect x="7" y="5" width="1" height="3"/><rect x="8" y="4" width="1" height="3"/><rect x="9" y="3" width="1" height="3"/></g></svg>
<svg class="chk" style="left:9px;top:244px" width="13" height="13" viewBox="0 0 13 13" shape-rendering="crispEdges"><rect x="0" y="0" width="13" height="13" fill="#fff"/><rect x="1" y="1" width="11" height="11" fill="#e3e3e3"/><path d="M0 0H13L11 2H2V11L0 13Z" fill="#868686"/><rect x="2" y="2" width="9" height="9" fill="#fff"/><g fill="#000"><rect x="3" y="5" width="1" height="3"/><rect x="4" y="6" width="1" height="3"/><rect x="5" y="7" width="1" height="3"/><rect x="6" y="6" width="1" height="3"/><rect x="7" y="5" width="1" height="3"/><rect x="8" y="4" width="1" height="3"/><rect x="9" y="3" width="1" height="3"/></g></svg>
<div id="focus"></div>
<div class="t" id="t0" style="left:27.04px;top:37px;letter-spacing:-0.372px">Motor 1</div>
<div class="t" id="t1" style="left:26.78px;top:57px;letter-spacing:-0.210px">Motor 2</div>
<div class="t" id="t2" style="left:26.78px;top:77px;letter-spacing:-0.204px">Motor 3</div>
<div class="t" id="t3" style="left:8.60px;top:143px;letter-spacing:0.000px">Display:</div>
<div class="t" id="t4" style="left:28.44px;top:162px;letter-spacing:-0.037px">Target</div>
<div class="t" id="t5" style="left:27.78px;top:182px;letter-spacing:-0.224px">Feedback</div>
<div class="t" id="t6" style="left:28.03px;top:202px;letter-spacing:0.703px">PWM</div>
<div class="t" id="t7" style="left:27.77px;top:222px;letter-spacing:-0.238px">Motor Limits</div>
<div class="t" id="t8" style="left:28.04px;top:242px;letter-spacing:-0.345px">Input Clipping</div>
<div class="t" id="t9" style="left:8.08px;top:353px;letter-spacing:-0.228px">Out Mode:</div>
<div class="t" id="t10" style="left:26.78px;top:372px;letter-spacing:-0.269px">Monitor</div>
<div class="t" id="t11" style="left:27.09px;top:392px;letter-spacing:-0.256px">Square</div>
<div class="t" id="t12" style="left:27.44px;top:412px;letter-spacing:-0.147px">Triangle</div>
<div class="t" id="t13" style="left:27.22px;top:432px;letter-spacing:-0.220px">Sine</div>
<div class="t" id="t14" style="left:26.78px;top:452px;letter-spacing:-0.284px">Motion</div>
<div class="t" id="t15" style="left:26.78px;top:472px;letter-spacing:0.094px">Manual</div>
<div class="t" id="t16" style="left:27.32px;top:492px;letter-spacing:-0.128px">UDP Pass thru</div>
<div class="t" id="t17" style="left:28.04px;top:513px;letter-spacing:-0.082px">pks/sec = 0</div>
<div class="t" id="t18" style="left:158.09px;top:393px;letter-spacing:-0.534px">Step</div>
<div class="t" id="t19" style="left:167.10px;top:413px;letter-spacing:0.000px">1</div>
<div class="t" id="t20" style="left:262.76px;top:373px;letter-spacing:-0.284px">Fpid / 1</div>
<div class="t" id="t21" style="left:263.32px;top:398px;letter-spacing:-0.100px">Kp = 350</div>
<div class="t" id="t22" style="left:263.32px;top:423px;letter-spacing:-0.140px">Ki = 0</div>
<div class="t" id="t23" style="left:263.04px;top:448px;letter-spacing:-0.181px">Kd = 0</div>
<div class="t" id="t24" style="left:262.78px;top:473px;letter-spacing:-0.406px">Ks = 1</div>
<div class="t" id="t25" style="left:482.43px;top:373px;letter-spacing:-0.150px">Fpwm = 25kHz</div>
<div class="t" id="t26" style="left:482.43px;top:398px;letter-spacing:0.081px">PWMmin = 0</div>
<div class="t" id="t27" style="left:482.43px;top:423px;letter-spacing:0.195px">PWMmax = 253</div>
<div class="t" id="t28" style="left:482.47px;top:448px;letter-spacing:0.135px">PWMrev = 205</div>
<div class="t" id="t29" style="left:483.04px;top:498px;letter-spacing:-0.122px">Tx: [ A 01 B7 ]</div>
<div class="t" id="t30" style="left:482.33px;top:523px;letter-spacing:0.017px">Rx: [ a 10 B4 ]</div>
<div class="t" id="t31" style="left:482.80px;top:548px;letter-spacing:-0.041px">Calcs/sec = 4015</div>
<div class="t" id="t32" style="left:747.49px;top:373px;letter-spacing:0.033px">Max Limits = 53</div>
<div class="t" id="t33" style="left:747.67px;top:398px;letter-spacing:-0.193px">Clip Input = 185</div>
<div class="t" id="t34" style="left:747.86px;top:423px;letter-spacing:0.061px">Deadzone = 0</div>
<div class="t" id="t35" style="left:747.75px;top:473px;letter-spacing:-0.215px">Arduino SMC3 ver 1.00</div>
<div class="t" id="t36" style="left:748.04px;top:498px;letter-spacing:-0.103px">Windows Utility ver 1.01</div>
<div class="t" id="t37" style="left:747.46px;top:523px;letter-spacing:-0.054px">UDP Port 20017</div>
<div class="t" id="t38" style="left:748.06px;top:548px;letter-spacing:-0.378px">Comm Port 4</div>
<div class="t" id="t39" style="left:191.09px;top:548px;letter-spacing:-0.077px">Settings have been saved</div>
<div class="btn" style="left:91px;top:35px;width:45px;height:20px"></div>
<div class="t" id="b0" style="left:103.22px;top:36px;letter-spacing:-0.858px">ON</div>
<div class="btn" style="left:91px;top:55px;width:45px;height:20px"></div>
<div class="t" id="b1" style="left:103.22px;top:56px;letter-spacing:-0.858px">ON</div>
<div class="btn" style="left:91px;top:75px;width:45px;height:20px"></div>
<div class="t" id="b2" style="left:103.22px;top:76px;letter-spacing:-0.858px">ON</div>
<div class="btn" style="left:18px;top:273px;width:100px;height:30px"></div>
<div class="t" id="b3" style="left:28.67px;top:279px;letter-spacing:0.013px">Save Image</div>
<div class="btn" style="left:158px;top:521px;width:50px;height:25px"></div>
<div class="t" id="b4" style="left:165.68px;top:525px;letter-spacing:0.137px">Save</div>
<div class="btn" style="left:208px;top:521px;width:50px;height:25px"></div>
<div class="t" id="b5" style="left:216.78px;top:525px;letter-spacing:-0.092px">Load</div>
<div class="btn" style="left:291px;top:521px;width:50px;height:25px"></div>
<div class="t" id="b6" style="left:297.11px;top:525px;letter-spacing:0.203px">-&gt; M2</div>
<div class="btn" style="left:341px;top:521px;width:50px;height:25px"></div>
<div class="t" id="b7" style="left:347.46px;top:525px;letter-spacing:0.239px">-&gt; M3</div>
<div class="btn" style="left:158px;top:373px;width:30px;height:20px"></div>
<div class="g" style="left:169px;top:375px">+</div>
<div class="btn" style="left:158px;top:433px;width:30px;height:20px"></div>
<div class="g" style="left:170.5px;top:434px">-</div>
<div class="sb" style="left:348px;top:373px"></div><div class="g" style="left:355.5px;top:372px">-</div><div class="sb" style="left:370px;top:373px"></div><div class="g" style="left:376px;top:373px">+</div>
<div class="sb" style="left:348px;top:398px"></div><div class="g" style="left:355.5px;top:397px">-</div><div class="sb" style="left:370px;top:398px"></div><div class="g" style="left:376px;top:398px">+</div>
<div class="sb" style="left:348px;top:423px"></div><div class="g" style="left:355.5px;top:422px">-</div><div class="sb" style="left:370px;top:423px"></div><div class="g" style="left:376px;top:423px">+</div>
<div class="sb" style="left:348px;top:448px"></div><div class="g" style="left:355.5px;top:447px">-</div><div class="sb" style="left:370px;top:448px"></div><div class="g" style="left:376px;top:448px">+</div>
<div class="sb" style="left:348px;top:473px"></div><div class="g" style="left:355.5px;top:472px">-</div><div class="sb" style="left:370px;top:473px"></div><div class="g" style="left:376px;top:473px">+</div>
<div class="sb" style="left:613px;top:373px"></div><div class="g" style="left:620.5px;top:372px">-</div><div class="sb" style="left:635px;top:373px"></div><div class="g" style="left:641px;top:373px">+</div>
<div class="sb" style="left:613px;top:398px"></div><div class="g" style="left:620.5px;top:397px">-</div><div class="sb" style="left:635px;top:398px"></div><div class="g" style="left:641px;top:398px">+</div>
<div class="sb" style="left:613px;top:423px"></div><div class="g" style="left:620.5px;top:422px">-</div><div class="sb" style="left:635px;top:423px"></div><div class="g" style="left:641px;top:423px">+</div>
<div class="sb" style="left:613px;top:448px"></div><div class="g" style="left:620.5px;top:447px">-</div><div class="sb" style="left:635px;top:448px"></div><div class="g" style="left:641px;top:448px">+</div>
<div class="sb" style="left:886px;top:373px"></div><div class="g" style="left:893.5px;top:372px">-</div><div class="sb" style="left:908px;top:373px"></div><div class="g" style="left:914px;top:373px">+</div>
<div class="sb" style="left:886px;top:398px"></div><div class="g" style="left:893.5px;top:397px">-</div><div class="sb" style="left:908px;top:398px"></div><div class="g" style="left:914px;top:398px">+</div>
<div class="sb" style="left:886px;top:423px"></div><div class="g" style="left:893.5px;top:422px">-</div><div class="sb" style="left:908px;top:423px"></div><div class="g" style="left:914px;top:423px">+</div>
<div class="sb" style="left:964px;top:112px"></div><div class="g" style="left:971.5px;top:111px">-</div>
<div class="sb" style="left:964px;top:176px"></div><div class="g" style="left:971.5px;top:175px">-</div>
<div class="sb" style="left:964px;top:240px"></div><div class="g" style="left:971.5px;top:239px">-</div>
</body>
</html>
